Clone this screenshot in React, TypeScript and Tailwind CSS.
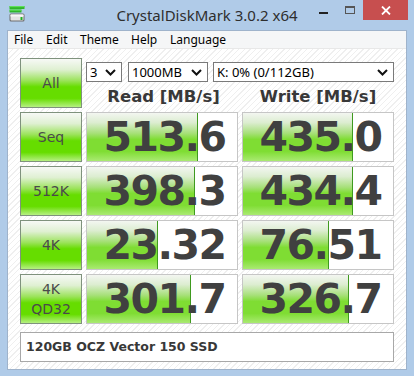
import React from "react";

const hatch =
  "bg-[repeating-linear-gradient(135deg,#ffffff_0px,#ffffff_3px,#efefef_3px,#efefef_4px)]";

function Chevron() {
  return (
    <svg width="11" height="7" viewBox="0 0 11 7" className="shrink-0">
      <path d="M1 1 L5.5 5.5 L10 1" fill="none" stroke="#111" strokeWidth="2" />
    </svg>
  );
}

function Drop({ w, text }: { w: string; text: string }) {
  return (
    <div
      className={`${w} h-[20px] bg-white border border-[#7a7a7a] flex items-center justify-between pl-[3px] pr-[5px] text-[13px] text-black leading-none`}
      style={{ fontFamily: '"Noto Sans", "DejaVu Sans", sans-serif' }}
    >
      <span>{text}</span>
      <Chevron />
    </div>
  );
}

function SideBtn({ children }: { children: React.ReactNode }) {
  return (
    <div
      className="w-[62px] h-[50px] border border-[#7f927d] bg-[linear-gradient(to_bottom,#f7f9f6_0%,#dff0d2_22%,#9be35a_45%,#66dd00_58%,#66dd00_82%,#b6f082_100%)] flex flex-col items-center justify-center text-[14px] text-[#4a4a4a] leading-[20px]"
      style={{ fontFamily: '"DejaVu Sans", sans-serif' }}
    >
      {children}
    </div>
  );
}

function Result({ value, bar }: { value: string; bar: number }) {
  return (
    <div className="relative w-[152px] h-[50px] border border-[#c6c6c6] bg-white">
      <div
        className="absolute left-0 top-0 bottom-0 border-r border-[#3f9a1f] bg-[linear-gradient(to_bottom,#f3f6f1_0%,#dcedd0_20%,#a7e07a_42%,#7fdd33_55%,#7fdd33_80%,#aaea72_100%)]"
        style={{ width: bar }}
      />
      <div
        className="relative h-full flex items-center justify-center pl-[5px] text-[41px] font-bold text-[#404040] tracking-[-1.5px] leading-none"
        style={{ fontFamily: '"DejaVu Sans", sans-serif' }}
      >
        {value}
      </div>
    </div>
  );
}

function Row({
  label,
  read,
  readBar,
  write,
  writeBar,
}: {
  label: React.ReactNode;
  read: string;
  readBar: number;
  write: string;
  writeBar: number;
}) {
  return (
    <div className="flex gap-[4px]">
      <SideBtn>{label}</SideBtn>
      <Result value={read} bar={readBar} />
      <Result value={write} bar={writeBar} />
    </div>
  );
}

export default function App() {
  return (
    <div className="w-[414px] h-[376px] bg-[#b0cbe8] flex flex-col overflow-hidden">
      {/* Title bar */}
      <div className="relative h-[30px] shrink-0">
        <svg
          className="absolute left-[9px] top-[6px]"
          width="17"
          height="17"
          viewBox="0 0 17 17"
        >
          <rect x="0.5" y="0" width="15" height="3" rx="0.5" fill="#2fb52a" />
          <rect x="0.5" y="0" width="15" height="1.2" fill="#5fe05a" />
          <rect x="0.5" y="3.5" width="12" height="3" rx="0.5" fill="#2fb52a" />
          <rect x="0.5" y="3.5" width="12" height="1.2" fill="#5fe05a" />
          <rect x="0.5" y="7.5" width="15" height="8" rx="1.5" fill="#6e6e6e" />
          <rect x="1.5" y="8.5" width="13" height="6" rx="1" fill="#e4e4e4" />
          <rect x="1.5" y="8.5" width="13" height="2" fill="#f7f7f7" />
          <rect x="11.5" y="11" width="2" height="3" fill="#22b022" />
        </svg>
        <div
          className="absolute left-0 right-0 top-[5px] text-center text-[15px] text-[#2e2e2e] leading-[20px]"
          style={{ fontFamily: '"Noto Sans", "Open Sans", sans-serif' }}
        >
          CrystalDiskMark 3.0.2 x64
        </div>
        <div className="absolute left-[319px] top-[12px] w-[9px] h-[2px] bg-[#222]" />
        <div className="absolute left-[345px] top-[6px] w-[10px] h-[8px] border border-[#555] border-t-2" />
        <div className="absolute left-[363px] top-0 w-[45px] h-[20px] bg-[#c74f4f] flex items-center justify-center">
          <svg width="10" height="9" viewBox="0 0 10 9">
            <path d="M1 0.5 L9 8.5 M9 0.5 L1 8.5" stroke="#fff" strokeWidth="1.8" />
          </svg>
        </div>
      </div>

      {/* Client area */}
      <div className="mx-[7px] h-[340px] border border-[#9fb3cb] flex flex-col bg-white">
        <div
          className="h-[18px] shrink-0 bg-[#f5f6f7] border-b border-[#e8e8e8] flex items-center text-[12px] text-black leading-none"
          style={{ fontFamily: '"Noto Sans", "Open Sans", sans-serif' }}
        >
          <span className="ml-[6px] w-[32px]">File</span>
          <span className="w-[34px]">Edit</span>
          <span className="w-[51px]">Theme</span>
          <span className="w-[39px]">Help</span>
          <span>Language</span>
        </div>

        <div className={`flex-1 ${hatch} pl-[12px] pt-[9px] flex flex-col`}>
          <div className="flex flex-col gap-[4px]">
            {/* Top row */}
            <div className="flex gap-[4px]">
              <SideBtn>All</SideBtn>
              <div className="w-[308px] flex flex-col">
                <div className="mt-[4px] flex">
                  <Drop w="w-[36px]" text="3" />
                  <div className="w-[6px]" />
                  <Drop w="w-[80px]" text="1000MB" />
                  <div className="w-[5px]" />
                  <Drop w="w-[181px]" text="K: 0% (0/112GB)" />
                </div>
                <div
                  className="mt-[4px] flex gap-[4px] text-[16.5px] font-bold text-[#383838] leading-[22px]"
                  style={{ fontFamily: '"DejaVu Sans", sans-serif' }}
                >
                  <div className="w-[152px] text-center pl-[3px]">Read [MB/s]</div>
                  <div className="w-[152px] text-center">Write [MB/s]</div>
                </div>
              </div>
            </div>

            <Row label="Seq" read="513.6" readBar={111} write="435.0" writeBar={110} />
            <Row label="512K" read="398.3" readBar={108} write="434.4" writeBar={110} />
            <Row label="4K" read="23.32" readBar={71} write="76.51" writeBar={86} />
            <Row
              label={
                <>
                  <span>4K</span>
                  <span>QD32</span>
                </>
              }
              read="301.7"
              readBar={104}
              write="326.7"
              writeBar={106}
            />
          </div>

          <div
            className="mt-[8px] w-[374px] h-[30px] bg-white border border-[#a8a8a8] flex items-center pl-[5px] text-[12.5px] font-bold text-[#383838]"
            style={{ fontFamily: '"DejaVu Sans", sans-serif' }}
          >
            120GB OCZ Vector 150 SSD
          </div>
        </div>
      </div>
      <div className="flex-1" />
    </div>
  );
}
